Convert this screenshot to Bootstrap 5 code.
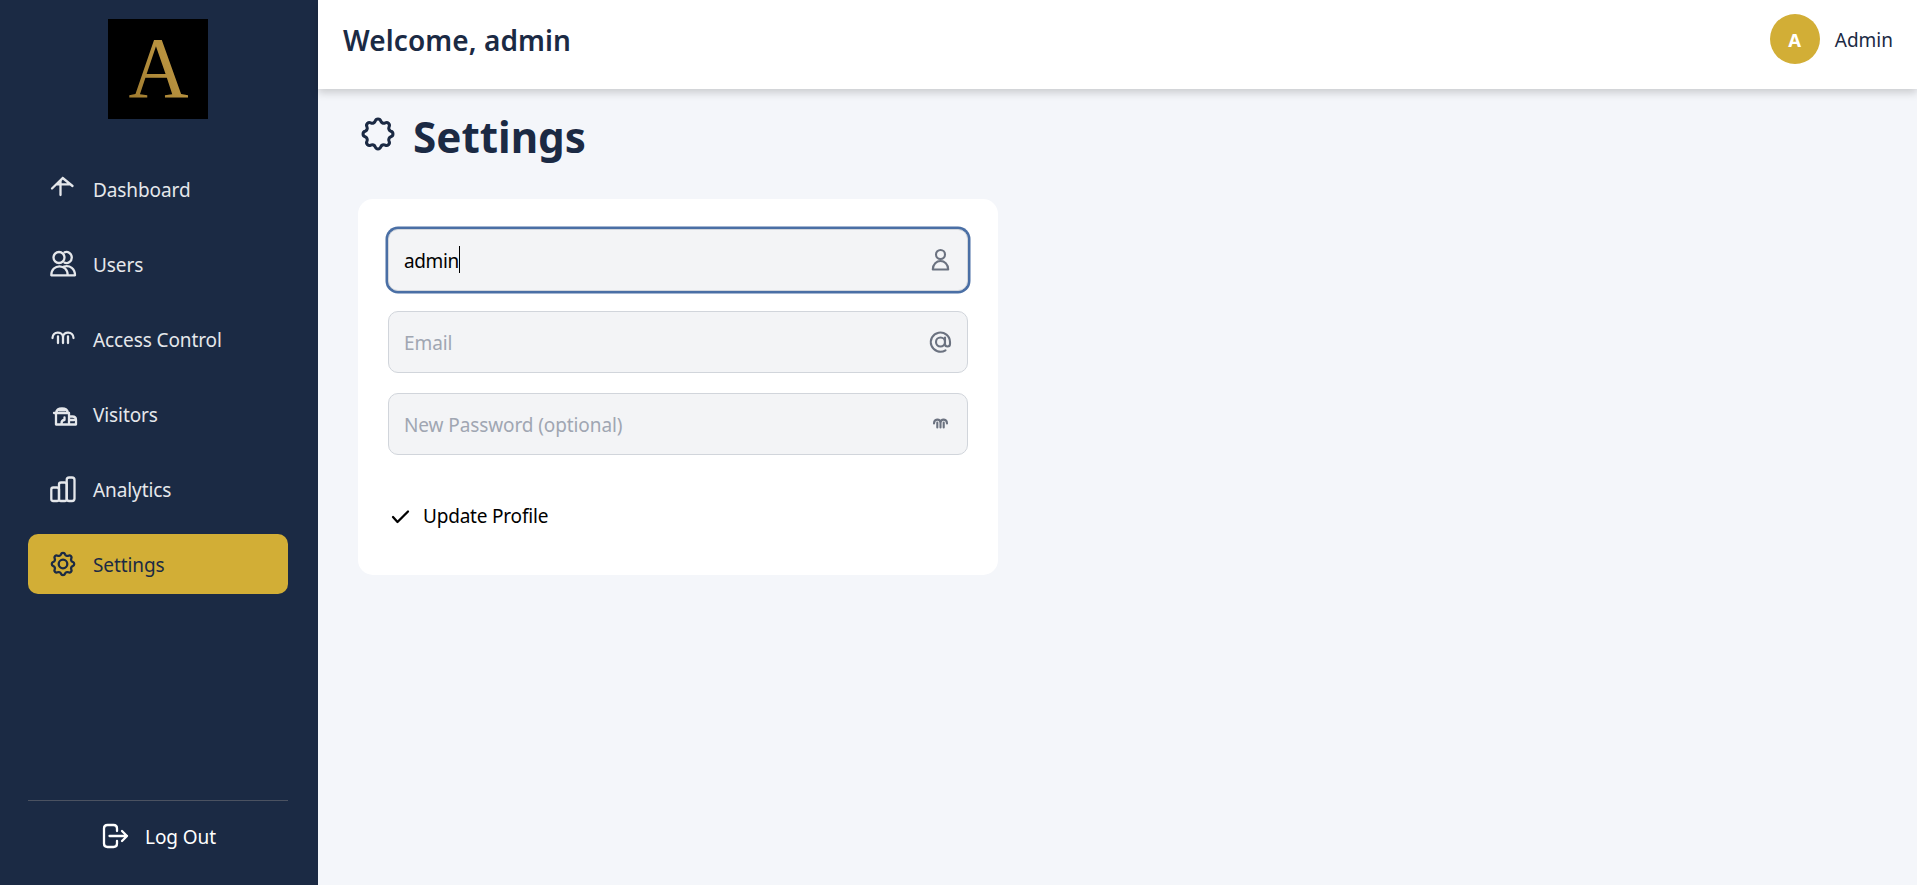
<!DOCTYPE html>
<html lang="en">
<head>
<meta charset="utf-8">
<meta name="viewport" content="width=device-width, initial-scale=1">
<title>Settings</title>
<link href="https://cdn.jsdelivr.net/npm/bootstrap@5.3.0/dist/css/bootstrap.min.css" rel="stylesheet">
<style>
:root{--navy:#1b2a44;--gold:#d2ae36}
body{background:#f4f6fa;font:19px/30px "Noto Sans","Open Sans",sans-serif;letter-spacing:-.1px;color:var(--navy)}
svg{fill:none;stroke:currentColor;stroke-width:2.3;stroke-linecap:round;stroke-linejoin:round;flex:none;display:block}
.sidebar{width:318px;background:var(--navy);padding:19px 30px 18px 28px;flex:none}
.logo{width:100px;height:100px;margin-left:80px;margin-bottom:40px;stroke:none}
.menu{gap:15px}
.menu .nav-link{height:60px;padding:0 20px;gap:15px;color:#e5e7eb;border-radius:10px}
.menu .nav-link span{padding-top:2px}
.menu .nav-link.active{background:var(--gold);color:var(--navy)}
.icon-menu{width:30px;height:30px}
.logout{border-top:1px solid #4b5261;color:#fff;height:67px;gap:15px;padding-top:4px}
.logout span{padding-top:1px}
.topbar{height:89px;padding:0 24px 0 25px;box-shadow:0 4px 8px rgba(0,0,0,.17)}
.welcome{font-size:28px;font-weight:600;line-height:38px;letter-spacing:.1px;padding-top:21px}
.avatar{width:50px;height:50px;background:var(--gold);color:#fff;font-weight:700;font-size:18.5px}
.avatar span,.account>span{padding-top:2px}
.account{gap:15px;padding-top:14px;letter-spacing:0}
.page-main{padding:20px 40px}
.page-title{gap:15px;height:60px;margin-bottom:30px}
.page-title h1{font-size:42.2px;font-weight:700;line-height:56px;height:60px;letter-spacing:0}
.page-title svg{margin-bottom:10px}
.panel{width:640px;height:376px;border-radius:15px;padding:30px}
.fields{gap:20px}
.field{height:62px;border:1px solid #d1d5db;border-radius:10px;background:#f3f4f6;padding:0 15px;color:#6b7280}
.field svg{stroke-width:2.1}
.field.focused{box-shadow:0 0 0 2.5px #4a6fa5}
.field input{background:transparent;outline:0;color:#000;padding:2px 0 0;min-width:0;letter-spacing:inherit}
.field input::placeholder{color:#a0a6b2;opacity:1}
.field-value{color:#000;padding-top:2px;letter-spacing:-.4px}
.caret{width:1px;height:27px;background:#000;margin-top:-2px}
.update{color:#000;margin-top:46px;gap:10px;font-size:19px;line-height:30px;letter-spacing:-.2px}
</style>
<script src="https://cdn.jsdelivr.net/npm/bootstrap@5.3.0/dist/js/bootstrap.bundle.min.js"></script>
</head>
<body class="d-flex vh-100 overflow-hidden">
<aside class="sidebar d-flex flex-column">
  <svg class="logo" viewBox="0 0 100 100">
    <defs><linearGradient id="gold" x1="0" y1="1" x2="1" y2="0"><stop stop-color="#9b772c"/><stop offset=".6" stop-color="#b8923f"/><stop offset="1" stop-color="#b48c3a"/></linearGradient></defs>
    <rect width="100" height="100" fill="#000"/>
    <text x="20.5" y="78" font-family="Liberation Serif,serif" font-size="87.500" textLength="60" lengthAdjust="spacingAndGlyphs" fill="url(#gold)">A</text>
  </svg>
  <nav class="menu nav flex-column">
    <a class="nav-link d-flex align-items-center" href="#">
      <svg class="icon-menu" viewBox="0 0 30 30"><path d="M4 14.500 14.700 4 24.500 12M12.500 6.500V21M8.500 10.300h13.500M12.500 6.500l2.200-2.500"/></svg>
      <span>Dashboard</span></a>
    <a class="nav-link d-flex align-items-center" href="#">
      <svg class="icon-menu" viewBox="0 0 30 30"><circle cx="11" cy="8.500" r="5.500"/><path d="M16.500 3.300a5.500 5.500 0 1 1 0 10.400M3.300 26.300c0-12 16.400-12 16.400 0ZM16 17.500c6-1.500 11 2 11 8.800h-7"/></svg>
      <span>Users</span></a>
    <a class="nav-link d-flex align-items-center" href="#">
      <svg class="icon-menu" viewBox="0 0 30 30"><path d="M4.500 14c0-7 10-7 10.500-1 0-6 10.500-6 10.500 1M10 12.500v6.500M15 12v7M20 12.500v6.500"/></svg>
      <span>Access Control</span></a>
    <a class="nav-link d-flex align-items-center" href="#">
      <svg class="icon-menu" viewBox="0 0 30 30"><path d="M6 14h15M8 14c1-6 11-6 12 0M8 14v11.500h20V21c0-2-1-3.500-3.500-3.500H21V14M21 18v7M16.500 18.500v2.500q-3 0-3 3.500M11 11h6M22 21h4"/></svg>
      <span>Visitors</span></a>
    <a class="nav-link d-flex align-items-center" href="#">
      <svg class="icon-menu" viewBox="0 0 30 30"><rect x="3.300" y="13.500" width="7.700" height="13.500" rx="2"/><rect x="11" y="8.500" width="7.700" height="18.500" rx="2"/><rect x="18.700" y="3.500" width="7.800" height="23.500" rx="2.500"/></svg>
      <span>Analytics</span></a>
    <a class="nav-link active d-flex align-items-center" href="#">
      <svg class="icon-menu" viewBox="0 0 30 30"><path class="gear"/><circle cx="15" cy="15" r="4.300"/></svg>
      <span>Settings</span></a>
  </nav>
  <a href="#" class="logout mt-auto d-flex align-items-center justify-content-center text-decoration-none">
    <svg class="icon-menu" viewBox="0 0 30 30"><path d="M17 10V7.500Q17 4 13.500 4h-6Q4 4 4 7.500v15Q4 26 7.500 26h6q3.500 0 3.500-3.500V20M9.500 15H27M22 10l5 5-5 5"/></svg>
    <span>Log Out</span></a>
</aside>
<div class="flex-grow-1">
  <header class="topbar bg-white d-flex justify-content-between align-items-start">
    <h2 class="welcome mb-0">Welcome, admin</h2>
    <div class="account d-flex align-items-center">
      <div class="avatar rounded-circle d-flex align-items-center justify-content-center"><span>A</span></div>
      <span>Admin</span>
    </div>
  </header>
  <main class="page-main">
    <div class="page-title d-flex align-items-center">
      <svg width="40" height="40" viewBox="0 0 30 30"><path class="gear"/></svg>
      <h1 class="mb-0">Settings</h1>
    </div>
    <section class="panel bg-white">
      <div class="fields d-flex flex-column">
        <div class="field focused d-flex align-items-center">
          <span class="field-value">admin</span><span class="caret"></span>
          <svg class="ms-auto" width="24" height="24" viewBox="0 0 24 24"><circle cx="12.500" cy="6.500" r="4.500"/><path d="M4.800 21.500c0-11.300 15.400-11.300 15.400 0Z"/></svg>
        </div>
        <div class="field d-flex align-items-center">
          <input class="border-0 flex-grow-1" placeholder="Email" aria-label="Email">
          <svg width="24" height="24" viewBox="0 0 24 24"><circle cx="12.500" cy="12" r="4.500"/><path d="M17 7.500V14c0 3.300 5 3.300 5 0v-2a9.600 9.600 0 1 0-4.500 8.300"/></svg>
        </div>
        <div class="field d-flex align-items-center">
          <input class="border-0 flex-grow-1" type="text" placeholder="New Password (optional)" aria-label="New Password">
          <svg width="24" height="24" viewBox="0 0 24 24"><path d="M6 11.500c0-5 6-5 6.500-1 .5-4 6.500-4 6.500 1M9.300 10.500v5M12.500 10.500v5M15.700 10.500v5"/></svg>
        </div>
      </div>
      <button class="update btn p-0 border-0 d-flex align-items-center">
        <svg width="25" height="25" viewBox="0 0 25 25"><path d="m5 13 4.500 5L20 7.500"/></svg><span>Update Profile</span>
      </button>
    </section>
  </main>
</div>
<script>
// Eight rounded lobes joined by shallow hollows, shared by the settings icons
const at = deg => {
  const a = deg * Math.PI / 180;
  return (15 + 9.9 * Math.sin(a)).toFixed(2) + ' ' + (15 - 9.9 * Math.cos(a)).toFixed(2);
};
let d = 'M' + at(-12);
for (let i = 0; i < 8; i++) {
  d += 'A2.150 2.150 0 0 1 ' + at(45 * i + 12) + 'A2.400 2.400 0 0 0 ' + at(45 * i + 33);
}
document.querySelectorAll('.gear').forEach(p => p.setAttribute('d', d + 'Z'));
</script>
</body>
</html>
